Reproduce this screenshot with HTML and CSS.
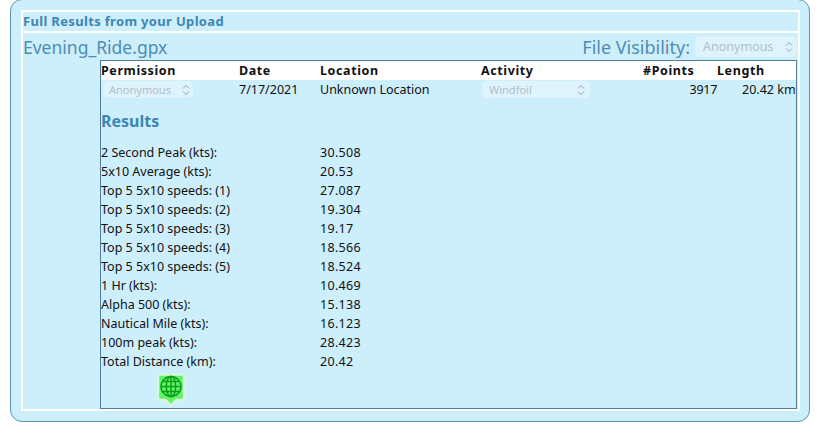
FILE: index.html
```html
<!DOCTYPE html>
<html lang="en">
  <head>
    <meta charset="UTF-8" />
    <title>Full Results</title>
    <link rel="stylesheet" href="styles.css">
  </head>
  <body>
    <div class="panel">
      <div class="frame">
        <h3 class="frame-title">Full Results from your Upload</h3>
        <div class="file-row">
          <span class="file-name">Evening_Ride.gpx</span>
          <span class="visibility">
            File Visibility:
            <span class="picker picker-top">Anonymous
              <svg class="updown" viewBox="0 0 8 12"><path d="M1 4.500 4 1.500 7 4.500M1 7.500 4 10.500 7 7.500" /></svg>
            </span>
          </span>
        </div>
        <div class="results-box">
          <div class="upload-row upload-head">
            <span>Permission</span>
            <span>Date</span>
            <span>Location</span>
            <span>Activity</span>
            <span>#Points</span>
            <span>Length</span>
          </div>
          <div class="upload-row">
            <span><span class="picker picker-perm">Anonymous
              <svg class="updown" viewBox="0 0 8 12"><path d="M1 4.500 4 1.500 7 4.500M1 7.500 4 10.500 7 7.500" /></svg>
            </span></span>
            <span>7/17/2021</span>
            <span>Unknown Location</span>
            <span><span class="picker picker-activity">Windfoil
              <svg class="updown" viewBox="0 0 8 12"><path d="M1 4.500 4 1.500 7 4.500M1 7.500 4 10.500 7 7.500" /></svg>
            </span></span>
            <span class="points">3917</span>
            <span class="length">20.42 km</span>
          </div>

          <h2 class="results-title">Results</h2>

          <div class="stats">
            <span>2 Second Peak (kts):</span><span>30.508</span>
            <span>5x10 Average (kts):</span><span>20.53</span>
            <span>Top 5 5x10 speeds: (1)</span><span>27.087</span>
            <span>Top 5 5x10 speeds: (2)</span><span>19.304</span>
            <span>Top 5 5x10 speeds: (3)</span><span>19.17</span>
            <span>Top 5 5x10 speeds: (4)</span><span>18.566</span>
            <span>Top 5 5x10 speeds: (5)</span><span>18.524</span>
            <span>1 Hr (kts):</span><span>10.469</span>
            <span>Alpha 500 (kts):</span><span>15.138</span>
            <span>Nautical Mile (kts):</span><span>16.123</span>
            <span>100m peak (kts):</span><span>28.423</span>
            <span>Total Distance (km):</span><span>20.42</span>
          </div>

          <div class="map-marker">
            <svg viewBox="0 0 30 34" width="30" height="34">
              <path class="pin" d="M4 1.500H26A2 2 0 0 1 28 3.500V25A2 2 0 0 1 26 27H20.500L15 32.500 9.500 27H4A2 2 0 0 1 2 25V3.500A2 2 0 0 1 4 1.500Z" />
              <g class="globe">
                <circle cx="15" cy="13.500" r="10" />
                <ellipse cx="15" cy="13.500" rx="4.700" ry="10" />
                <path d="M15 3.500V23.500M5 13.500H25M6.500 8.500H23.500M6.500 18.500H23.500" />
              </g>
            </svg>
          </div>
        </div>
      </div>
    </div>
  </body>
</html>
```

FILE: styles.css
```css
* {
  box-sizing: border-box;
}

body {
  margin: 0;
  background: #ffffff;
  font-family: "Noto Sans", "Open Sans", sans-serif;
  font-size: 12.5px;
  color: #111;
  overflow: hidden;
}

.panel {
  width: 800px;
  height: 423px;
  margin: -1px 0 0 10px;
  padding: 10px 9px 10px 10px;
  background: #cdeefb;
  border: 1px solid #5f93b3;
  border-radius: 12px;
}

.frame {
  height: 401px;
  border: 2px solid #ffffff;
  position: relative;
}

.frame-title {
  margin: 0;
  height: 21px;
  border-bottom: 2px solid #ffffff;
  font-size: 13px;
  line-height: 19px;
  font-weight: 700;
  letter-spacing: 0.33px;
  color: #3d86b3;
}

.file-row {
  display: flex;
  justify-content: space-between;
  align-items: center;
  height: 27px;
  color: #4d8db5;
  font-size: 17.5px;
}

.visibility {
  display: flex;
  align-items: center;
  gap: 5px;
  margin-right: 1px;
  font-size: 18px;
}

.picker {
  display: inline-flex;
  align-items: center;
  justify-content: space-between;
  background: #def3fc;
  border-radius: 5px;
  color: #b0c2cb;
}

.picker-top {
  width: 102px;
  height: 21px;
  font-size: 12.5px;
  padding: 0 4px 0 8px;
}

.picker-perm {
  width: 90px;
  height: 17px;
  margin-left: 2px;
  font-size: 11px;
  padding: 0 3px 0 6px;
}

.picker-activity {
  width: 108px;
  height: 17px;
  margin-left: 1px;
  font-size: 11px;
  padding: 0 5px 0 7px;
}

.updown {
  width: 8px;
  height: 12px;
}

.updown path {
  fill: none;
  stroke: #8fa5b0;
  stroke-width: 1;
}

.results-box {
  position: absolute;
  top: 48px;
  left: 77px;
  width: 697px;
  height: 349px;
  border: 1px solid #4f7f9c;
}

.upload-row {
  display: grid;
  grid-template-columns: 138px 81px 161px 162px 74px 1fr;
  height: 19px;
  align-items: center;
  white-space: nowrap;
}

.upload-head {
  background: #ffffff;
  font-weight: 700;
  letter-spacing: 0.6px;
}

.points {
  text-align: right;
  letter-spacing: -0.3px;
}

.length {
  padding-left: 25px;
}

.results-title {
  margin: 11px 0 11px;
  font-size: 16px;
  line-height: 22px;
  font-weight: 700;
  color: #3d86b3;
}

.stats {
  display: grid;
  grid-template-columns: 219px 1fr;
  grid-auto-rows: 19px;
  align-items: center;
}

.stats span:nth-child(even) {
  letter-spacing: 0.3px;
}

.map-marker {
  position: absolute;
  left: 55px;
  top: 312px;
  width: 30px;
  height: 34px;
}

.pin {
  fill: #66f266;
  stroke: #d6f6e2;
  stroke-width: 2.500;
}

.globe circle,
.globe ellipse,
.globe path {
  fill: none;
  stroke: #0aa01e;
  stroke-width: 1.500;
}
```
